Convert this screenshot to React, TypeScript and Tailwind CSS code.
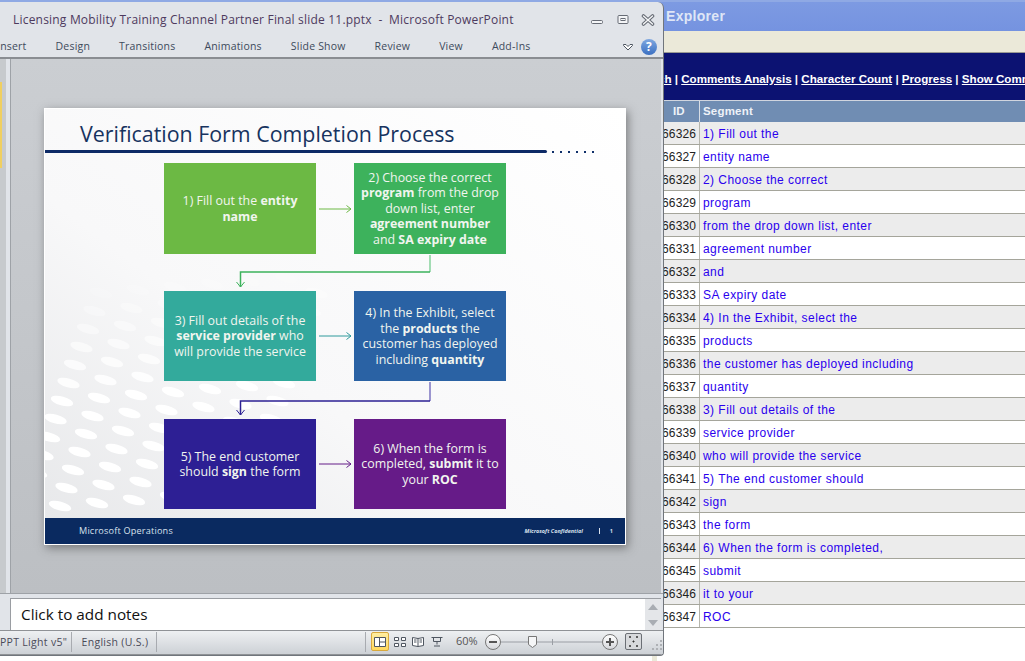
import { ReactNode } from "react";

const ui = "font-['Open_Sans',sans-serif]";

const rows = [
  ["66326", "1) Fill out the"],
  ["66327", "entity name"],
  ["66328", "2) Choose the correct"],
  ["66329", "program"],
  ["66330", "from the drop down list, enter"],
  ["66331", "agreement number"],
  ["66332", "and"],
  ["66333", "SA expiry date"],
  ["66334", "4) In the Exhibit, select the"],
  ["66335", "products"],
  ["66336", "the customer has deployed including"],
  ["66337", "quantity"],
  ["66338", "3) Fill out details of the"],
  ["66339", "service provider"],
  ["66340", "who will provide the service"],
  ["66341", "5) The end customer should"],
  ["66342", "sign"],
  ["66343", "the form"],
  ["66344", "6) When the form is completed,"],
  ["66345", "submit"],
  ["66346", "it to your"],
  ["66347", "ROC"],
];

const tabs = ["Insert", "Design", "Transitions", "Animations", "Slide Show", "Review", "View", "Add-Ins"];

function Browser() {
  return (
    <div className="flex flex-col font-['Liberation_Sans',sans-serif]">
      <div className="h-[31px] border-t-2 border-[#8fa9e4] bg-gradient-to-b from-[#7d9ae2] to-[#7593e0] pt-[4px] pl-[666px] text-[14px] font-bold tracking-[0.3px] text-[#dfe6f6]">
        Explorer
      </div>
      <div className="ml-[663px] flex w-[362px] flex-col overflow-hidden">
        <div className="h-[22px] border-b border-[#9a9a94] bg-[#ebe9d9]" />
        <div className="h-[47px] bg-[#0c1272] pt-[17px] text-[11.6px] font-bold whitespace-nowrap text-white">
          <span className="-ml-[5px] underline">ch</span> | <span className="underline">Comments Analysis</span> |{" "}
          <span className="underline">Character Count</span> | <span className="underline">Progress</span> |{" "}
          <span className="underline">Show Comments</span>
        </div>
        <div className="flex h-[22px] border-t border-[#d0d5df] bg-[#708db3] text-[11.5px] leading-[20px] font-bold text-[#eef2f8]">
          <div className="w-[37px] border-r border-[#d8dde5] pl-[10px]">ID</div>
          <div className="pl-[3px] tracking-[0.2px]">Segment</div>
        </div>
        {rows.map(([id, text], i) => (
          <div
            key={id}
            className={`flex h-[23px] border-b border-[#a5a59b] text-[12px] leading-[24px] ${
              i % 2 === 0 ? "bg-[#ececec]" : "bg-white"
            }`}
          >
            <div className="w-[37px] overflow-hidden border-r border-[#b5b5ac] whitespace-nowrap text-[#222]">
              <span className="-ml-[1px] block tracking-[0.15px]">{id}</span>
            </div>
            <div className="pl-[3px] tracking-[0.45px] text-[#2a00ee]">{text}</div>
          </div>
        ))}
      </div>
    </div>
  );
}

function WindowControls() {
  return (
    <div className="flex items-center">
      <svg width="14" height="10" viewBox="0 0 14 10" className="mr-[12px]">
        <rect x="1.500" y="5.500" width="11" height="3" rx="1" fill="#f4f5f7" stroke="#666b74" />
      </svg>
      <svg width="14" height="12" viewBox="0 0 14 12" className="mr-[11px]">
        <rect x="2" y="1.500" width="10" height="8" rx="1" fill="#f4f5f7" stroke="#666b74" />
        <rect x="5" y="4.500" width="4" height="2" fill="none" stroke="#666b74" />
      </svg>
      <svg width="14" height="12" viewBox="0 0 14 12">
        <path d="M2.500 2l9 8M11.500 2l-9 8" stroke="#666b74" strokeWidth="3.600" strokeLinecap="round" />
        <path d="M2.500 2l9 8M11.500 2l-9 8" stroke="#f4f5f7" strokeWidth="1.500" strokeLinecap="round" />
      </svg>
    </div>
  );
}

function Ribbon() {
  return (
    <>
      <div className="flex h-[33px] items-center justify-between pt-[2px] pr-[8px] pl-[13px] text-[12px] tracking-[0.2px] whitespace-nowrap text-[#4d3a5e]">
        <span>Licensing Mobility Training Channel Partner Final slide 11.pptx&nbsp; -&nbsp; Microsoft PowerPoint</span>
        <WindowControls />
      </div>
      <div className="flex h-[22px] items-center gap-[29px] pt-[1px] pr-[6px] text-[10.500px] tracking-[0.2px] whitespace-nowrap text-[#3d4a5c]">
        {tabs.map((t, i) => (
          <div key={t} className={i === 0 ? "-ml-[3px]" : ""}>
            {t}
          </div>
        ))}
        <div className="ml-auto flex items-center">
          <svg width="12" height="9" viewBox="0 0 12 9">
            <path d="M1.500 2.500h2.500l2 2 2-2h2.500v1L6 8 1.500 3.500z" fill="#fff" stroke="#4d5561" />
          </svg>
          <div className="ml-[7px] flex h-[16px] w-[16px] items-center justify-center rounded-full bg-gradient-to-b from-[#80a8e0] to-[#3a6fc2] text-[12px] font-bold text-white">
            ?
          </div>
        </div>
      </div>
    </>
  );
}

function Connector({ tone, h, y, soft }: { tone: string; h: number; y: number; soft: string }) {
  const tip = h - 4;
  return (
    <div className={`w-[342px] ${tone}`}>
      <svg width="342" height={h} viewBox={`0 0 342 ${h}`} fill="none" stroke="currentColor" className="block">
        <path d={`M266 1V${y}`} stroke={soft} strokeWidth="2" />
        <path d={`M266 ${y}H76.500V${tip}`} strokeWidth="1.500" />
        <path d={`M72.500 ${tip - 5}l4 5 4-5`} />
      </svg>
    </div>
  );
}

function Arrow({ tone }: { tone: string }) {
  return (
    <div className={`flex w-[38px] items-center justify-center ${tone}`}>
      <svg width="34" height="10" viewBox="0 0 34 10" fill="none" stroke="currentColor">
        <path d="M1 5h32M28.500 1.500l4.500 3.500-4.500 3.500" />
      </svg>
    </div>
  );
}

function Box({ bg, h, children }: { bg: string; h: string; children: ReactNode }) {
  return (
    <div className={`flex w-[152px] ${h} ${bg} items-center justify-center text-center text-[12.4px] leading-[15.5px] whitespace-nowrap text-[#f1f5ef]`}>
      <p>{children}</p>
    </div>
  );
}

function Dots() {
  const spots: { x: number; y: number; o: number }[] = [];
  for (let r = 0; r < 13; r++) {
    for (let c = -1; c < 6; c++) {
      spots.push({ x: 15 + c * 37 + r * 6.500, y: 397 - r * 18 - c * 3, o: r < 7 ? 1 : 1 - (r - 6) * 0.14 });
    }
  }
  return (
    <svg width="582" height="437" viewBox="0 0 582 437" className="absolute top-0 left-0">
      {spots.map(({ x, y, o }) => (
        <ellipse
          key={`${x}-${y}`}
          cx={x}
          cy={y}
          rx="11.500"
          ry="4.500"
          transform={`rotate(15 ${x} ${y})`}
          fill="#ffffff"
          opacity={o}
        />
      ))}
    </svg>
  );
}

function Slide() {
  return (
    <div className="relative flex h-[437px] w-[582px] flex-col overflow-hidden border border-white bg-gradient-to-tr from-[#e6e7e9] via-[#f8f8f9] via-40% to-white shadow-[2px_3px_9px_rgba(60,60,60,0.55)]">
      <Dots />
      <div className="relative flex-1">
        <h1 className="pt-[10px] pl-[35px] text-[21.400px] leading-[30px] font-normal text-[#17335f]">
          Verification Form Completion Process
        </h1>
        <div className="mt-[1px] flex items-center">
          <div className="h-[3px] w-[502px] rounded-r-[2px] bg-[#0d2a66]" />
          <div className="ml-[5px] flex gap-[6px]">
            {[0, 1, 2, 3, 4, 5].map((d) => (
              <div key={d} className="h-[2px] w-[2px] bg-[#10306a]" />
            ))}
          </div>
        </div>
        <div className="ml-[119px] pt-[10px]">
          <div className="flex">
            <Box bg="bg-[#6cb944]" h="h-[91px]">
              1) Fill out the <b>entity</b>
              <br />
              <b>name</b>
            </Box>
            <Arrow tone="text-[#6cb944]" />
            <Box bg="bg-[#3db25c]" h="h-[91px]">
              2) Choose the correct
              <br />
              <b>program</b> from the drop
              <br />
              down list, enter
              <br />
              <b>agreement number</b>
              <br />
              and <b>SA expiry date</b>
            </Box>
          </div>
          <Connector tone="text-[#3db25c]" h={37} y={18} soft="#a3dcb4" />
          <div className="flex">
            <Box bg="bg-[#33aa9c]" h="h-[90px]">
              3) Fill out details of the
              <br />
              <b>service provider</b> who
              <br />
              will provide the service
            </Box>
            <Arrow tone="text-[#2f9a9c]" />
            <Box bg="bg-[#2a62a4]" h="h-[90px]">
              4) In the Exhibit, select
              <br />
              the <b>products</b> the
              <br />
              customer has deployed
              <br />
              including <b>quantity</b>
            </Box>
          </div>
          <Connector tone="text-[#2d2194]" h={38} y={20} soft="#9b95cf" />
          <div className="flex">
            <Box bg="bg-[#2d1f94]" h="h-[90px]">
              5) The end customer
              <br />
              should <b>sign</b> the form
            </Box>
            <Arrow tone="text-[#641c88]" />
            <Box bg="bg-[#661b88]" h="h-[90px]">
              6) When the form is
              <br />
              completed, <b>submit</b> it to
              <br />
              your <b>ROC</b>
            </Box>
          </div>
        </div>
      </div>
      <div className="relative flex h-[26px] items-center justify-between bg-[#0a2a60] pr-[12px] pl-[34px] text-[#d8e0ec]">
        <span className="text-[9.100px] tracking-[0.2px]">Microsoft Operations</span>
        <span className="flex items-center text-[5.500px] font-bold italic">
          Microsoft Confidential
          <span className="ml-[16px] h-[6px] w-[1px] bg-[#d8e0ec]" />
          <span className="ml-[10px] not-italic">1</span>
        </span>
      </div>
    </div>
  );
}

function StatusBar() {
  return (
    <div className="flex h-[25px] items-center border-y border-[#8f9296] bg-gradient-to-b from-[#eef0f2] to-[#cdd1d6] pb-[2px] text-[10.500px] tracking-[0.3px] whitespace-nowrap text-[#4a4a58]">
      <div className="w-[72px] border-r border-[#a8abb0] leading-[20px]">PPT Light v5"</div>
      <div className="w-[86px] border-r border-[#a8abb0] pl-[10px] leading-[20px]">English (U.S.)</div>
      <div className="ml-[208px] flex h-[20px] items-center border-l border-[#a8abb0] pl-[5px]">
        <div className="flex h-[19px] w-[18px] items-center justify-center rounded-[2px] border border-[#d9a93c] bg-gradient-to-b from-[#ffeea0] to-[#ffd85c]">
          <svg width="12" height="10" viewBox="0 0 12 10" fill="#fff" stroke="#4f5660">
            <path d="M.5.5h11v9H.5zM5.500.5v9M5.500 5h6" />
          </svg>
        </div>
        <svg width="12" height="10" viewBox="0 0 12 10" fill="#fff" stroke="#4f5660" className="ml-[5px]">
          <path d="M.5.5h4v3h-4zM7.500.5h4v3h-4zM.5 6.500h4v3h-4zM7.500 6.500h4v3h-4z" />
        </svg>
        <svg width="12" height="11" viewBox="0 0 12 11" fill="#fff" stroke="#4f5660" className="ml-[6px]">
          <path d="M.5 1.500l5.500 1 5.500-1v8l-5.500 1-5.500-1zM6 2.500v8M2 4h2.500M2 6h2.500M7.500 4H10M7.500 6H10" />
        </svg>
        <svg width="12" height="11" viewBox="0 0 12 11" fill="none" stroke="#4f5660" className="ml-[7px]">
          <path d="M.5 1.500h11M2.500 1.500v4h7v-4M6 5.500v3M3 10h6" />
        </svg>
        <span className="ml-[13px] w-[21px] text-[11px] tracking-normal text-[#555]">60%</span>
        <div className="ml-[8px] flex h-[16px] w-[16px] items-center justify-center rounded-full border border-[#777] bg-gradient-to-b from-white to-[#d6d8dc]">
          <div className="h-[2px] w-[8px] bg-[#555]" />
        </div>
        <svg width="101" height="14" viewBox="0 0 101 14" fill="none" className="block">
          <path d="M0 7h101" stroke="#9a9ea4" />
          <path d="M51.500 4v6" stroke="#9a9ea4" />
          <path d="M27.500 1.500h8v8l-4 3-4-3z" fill="#f5f6f7" stroke="#777" />
        </svg>
        <div className="relative flex h-[16px] w-[16px] items-center justify-center rounded-full border border-[#777] bg-gradient-to-b from-white to-[#d6d8dc]">
          <div className="h-[2px] w-[8px] bg-[#555]" />
          <div className="absolute h-[8px] w-[2px] bg-[#555]" />
        </div>
        <svg width="17" height="17" viewBox="0 0 17 17" className="ml-[7px]">
          <rect x=".5" y=".5" width="16" height="16" rx="1.500" fill="#d7d9dc" stroke="#6b6f75" />
          <path d="M4 4h2M5 3v2M11 4h2M12 3v2M4 13h2M5 12v2M11 13h2M12 12v2M7.500 8.500h2M8.500 7.500v2" stroke="#333" />
        </svg>
        <svg width="12" height="12" viewBox="0 0 12 12" fill="#aeb1b5" className="mt-[6px] ml-[9px]">
          <path d="M9 1h2v2H9zM5 5h2v2H5zM9 5h2v2H9zM1 9h2v2H1zM5 9h2v2H5zM9 9h2v2H9z" />
        </svg>
      </div>
    </div>
  );
}

function PowerPoint() {
  return (
    <div className={`absolute top-[2px] left-0 flex h-[654px] w-[664px] flex-col overflow-hidden rounded-tr-[6px] rounded-br-[4px] border-r border-b border-[#70757c] bg-[#e1e4e9] ${ui}`}>
      <Ribbon />
      <div className="flex h-[536px] border-t-2 border-[#8a8d92]">
        <div className="flex w-[11px] border-r border-[#9ea2a7]">
          <div className="w-[6px] bg-[#c7cacd]">
            <div className="mt-[23px] h-[86px] w-[2px] bg-[#f0cf60]" />
          </div>
        </div>
        <div className="flex-1 bg-gradient-to-b from-[#cbced2] to-[#bcbfc3] pt-[49px] pl-[33px]">
          <Slide />
        </div>
        <div className="w-[2px] bg-[#e1e4e9]" />
      </div>
      <div className="flex h-[37px] border-t border-[#9ea2a7] pt-[4px] pl-[10px]">
        <div className="flex flex-1 border-t border-l border-[#9a9da2] bg-white">
          <div className="flex-1 pt-[4px] pl-[10px] text-[15.300px] leading-[22px] text-[#111]">Click to add notes</div>
          <div className="flex w-[16px] flex-col items-center justify-center gap-[10px] bg-[#e4e6e9]">
            <div className="h-0 w-0 border-x-[5px] border-b-[6px] border-x-transparent border-b-[#a9adb3]" />
            <div className="h-0 w-0 border-x-[5px] border-t-[6px] border-x-transparent border-t-[#a9adb3]" />
          </div>
        </div>
        <div className="w-[2px]" />
      </div>
      <StatusBar />
    </div>
  );
}

export default function App() {
  return (
    <div className="relative h-[661px] w-[1025px] overflow-hidden bg-white">
      <Browser />
      <div className="absolute top-[655px] left-[652px] h-[6px] w-[5px] bg-[#ebe9d9]" />
      <PowerPoint />
    </div>
  );
}
